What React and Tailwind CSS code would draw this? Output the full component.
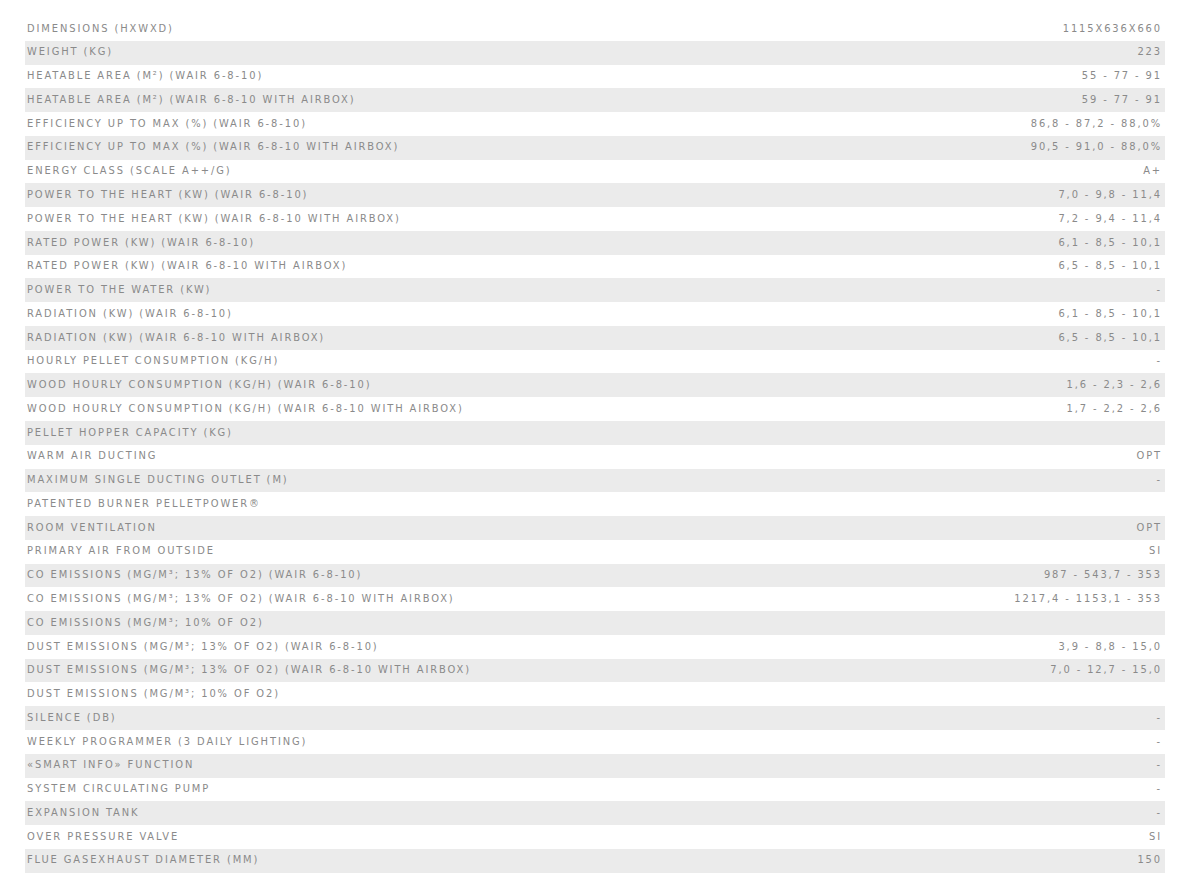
const rows = [
  ["Dimensions (HxWxD)", "1115x636x660"],
  ["Weight (kg)", "223"],
  ["Heatable area (m²) (Wair 6-8-10)", "55 - 77 - 91"],
  ["Heatable area (m²) (Wair 6-8-10 with Airbox)", "59 - 77 - 91"],
  ["Efficiency up to max (%) (Wair 6-8-10)", "86,8 - 87,2 - 88,0%"],
  ["Efficiency up to max (%) (Wair 6-8-10 with Airbox)", "90,5 - 91,0 - 88,0%"],
  ["Energy class (scale A++/G)", "A+"],
  ["Power to the heart (kW) (Wair 6-8-10)", "7,0 - 9,8 - 11,4"],
  ["Power to the heart (kW) (Wair 6-8-10 with Airbox)", "7,2 - 9,4 - 11,4"],
  ["Rated power (kW) (Wair 6-8-10)", "6,1 - 8,5 - 10,1"],
  ["Rated power (kW) (Wair 6-8-10 with Airbox)", "6,5 - 8,5 - 10,1"],
  ["Power to the water (kW)", "-"],
  ["Radiation (kW) (Wair 6-8-10)", "6,1 - 8,5 - 10,1"],
  ["Radiation (kW) (Wair 6-8-10 with Airbox)", "6,5 - 8,5 - 10,1"],
  ["Hourly pellet consumption (kg/h)", "-"],
  ["Wood hourly consumption (kg/h) (Wair 6-8-10)", "1,6 - 2,3 - 2,6"],
  ["Wood hourly consumption (kg/h) (Wair 6-8-10 with Airbox)", "1,7 - 2,2 - 2,6"],
  ["Pellet hopper capacity (kg)", ""],
  ["Warm air ducting", "OPT"],
  ["Maximum single ducting outlet (m)", "-"],
  ["Patented burner PelletPower®", ""],
  ["Room ventilation", "OPT"],
  ["Primary air from outside", "SI"],
  ["CO emissions (mg/m³; 13% of O2) (Wair 6-8-10)", "987 - 543,7 - 353"],
  ["CO emissions (mg/m³; 13% of O2) (Wair 6-8-10 with Airbox)", "1217,4 - 1153,1 - 353"],
  ["CO emissions (mg/m³; 10% of O2)", ""],
  ["Dust emissions (mg/m³; 13% of O2) (Wair 6-8-10)", "3,9 - 8,8 - 15,0"],
  ["Dust emissions (mg/m³; 13% of O2) (Wair 6-8-10 with Airbox)", "7,0 - 12,7 - 15,0"],
  ["Dust emissions (mg/m³; 10% of O2)", ""],
  ["Silence (dB)", "-"],
  ["Weekly programmer (3 daily lighting)", "-"],
  ["«Smart Info» function", "-"],
  ["System circulating pump", "-"],
  ["Expansion tank", "-"],
  ["Over pressure valve", "SI"],
  ["Flue gasexhaust diameter (mm)", "150"],
];

export default function App() {
  return (
    <div className="min-h-[875px] bg-white pt-[17px] pl-[25px] pr-[22px]">
      <div
        className="flex flex-col text-[11px] uppercase tracking-[1.9px] text-[#8a8a8a]"
        style={{ fontFamily: '"Liberation Sans Narrow", "DejaVu Sans Condensed", sans-serif' }}
      >
        {rows.map(([label, value], i) => (
          <div
            key={i}
            className={`flex h-[23.78px] items-center justify-between pl-[2px] pr-[3px] ${i % 2 === 1 ? "bg-[#ebebeb]" : "bg-white"}`}
          >
            <span className="whitespace-nowrap">{label}</span>
            <span className="whitespace-nowrap">{value}</span>
          </div>
        ))}
      </div>
    </div>
  );
}
